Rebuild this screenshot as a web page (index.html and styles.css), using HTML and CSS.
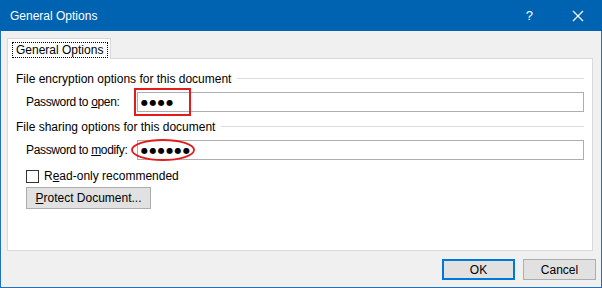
FILE: index.html
```html
<!DOCTYPE html>
<html lang="en">
<head>
    <meta charset="UTF-8">
    <title>General Options</title>
    <link rel="stylesheet" href="styles.css">
</head>
<body>
    <div class="window">
        <div class="titlebar">
            <span class="title">General Options</span>
            <span class="help">?</span>
            <svg class="close" width="12" height="12" viewBox="0 0 12 12">
                <path d="M1 1 L11 11 M11 1 L1 11" stroke="#fff" stroke-width="1.2" fill="none"/>
            </svg>
        </div>
        <div class="body">
            <div class="tabs">
                <div class="tab"><span class="tabLabel">General Options</span></div>
            </div>
            <div class="panel">
                <div class="groupHead">
                    <span>File encryption options for this document</span>
                    <div class="rule"></div>
                </div>
                <div class="row">
                    <label class="label">Password to <u>o</u>pen:</label>
                    <div class="field"><span class="dots">●●●●</span></div>
                    <div class="markRect"></div>
                </div>
                <div class="groupHead second">
                    <span>File sharing options for this document</span>
                    <div class="rule"></div>
                </div>
                <div class="row">
                    <label class="label">Password to <u>m</u>odify:</label>
                    <div class="field"><span class="dots">●●●●●●</span></div>
                    <svg class="markOval" width="66" height="24" viewBox="0 0 66 24">
                        <ellipse cx="33" cy="12" rx="31" ry="10" stroke="#e31b1b" stroke-width="1.8" fill="none"/>
                    </svg>
                </div>
                <div class="check">
                    <span class="box"></span>
                    <span>R<u>e</u>ad-only recommended</span>
                </div>
                <button class="btn protect"><u>P</u>rotect Document...</button>
            </div>
            <div class="footer">
                <button class="btn ok">OK</button>
                <button class="btn cancel">Cancel</button>
            </div>
        </div>
    </div>
</body>
</html>
```

FILE: styles.css
```css
body {
    margin: 0;
    font-family: "Liberation Sans", Arial, sans-serif;
    font-size: 12px;
    color: #000;
}

.window {
    width: 602px;
    height: 288px;
    box-sizing: border-box;
    border: 1px solid #1f72c0;
    border-top: none;
    background-color: #f0f0f0;
    display: flex;
    flex-direction: column;
}

.titlebar {
    height: 31px;
    margin: 0 -1px;
    background-color: #0063b1;
    color: #fff;
    display: flex;
    align-items: center;
    padding: 0 0 0 10px;
}

.title {
    flex: 1;
    font-size: 12px;
}

.help {
    font-size: 13px;
    margin-right: 39px;
}

.close {
    margin-right: 18px;
}

.body {
    flex: 1;
    padding: 7px 0 0 6px;
    display: flex;
    flex-direction: column;
}

.tabs {
    display: flex;
    height: 20px;
}

.tab {
    width: 104px;
    height: 21px;
    box-sizing: border-box;
    border: 1px solid #d9d9d9;
    border-bottom: none;
    background-color: #fff;
    position: relative;
    z-index: 1;
    padding: 3px 0 0 4px;
    white-space: nowrap;
}

.tabLabel {
    display: inline-block;
    border: 1px dotted #000;
    padding: 0 4px 0 3px;
    line-height: 14px;
}

.panel {
    width: 586px;
    height: 193px;
    box-sizing: border-box;
    border: 1px solid #d9d9d9;
    background-color: #fff;
    padding: 12px 8px 0 8px;
}

.groupHead {
    display: flex;
    align-items: center;
    height: 16px;
    white-space: nowrap;
}

.groupHead.second {
    margin-top: 7px;
}

.rule {
    flex: 1;
    height: 1px;
    background-color: #dcdcdc;
    margin: 0 0 1px 6px;
}

.row {
    display: flex;
    align-items: center;
    margin: 5px 0 0 10px;
    position: relative;
}

.label {
    width: 111px;
    white-space: nowrap;
    letter-spacing: -0.35px;
}

.field {
    flex: 1;
    height: 20px;
    box-sizing: border-box;
    border: 1px solid #adadad;
    display: flex;
    align-items: center;
    padding-left: 3px;
}

.dots {
    font-family: "DejaVu Sans", sans-serif;
    font-size: 8px;
    letter-spacing: 1.4px;
}

.markRect {
    position: absolute;
    left: 108px;
    top: -4px;
    width: 53px;
    height: 24px;
    border: 2px solid #e31b1b;
}

.markOval {
    position: absolute;
    left: 104px;
    top: -2px;
}

.check {
    display: flex;
    align-items: center;
    margin: 8px 0 0 10px;
    height: 16px;
}

.box {
    width: 11px;
    height: 11px;
    border: 1px solid #333;
    background-color: #fff;
    margin-right: 5px;
}

.btn {
    font-family: "Liberation Sans", Arial, sans-serif;
    font-size: 12px;
    color: #000;
    background-color: #e1e1e1;
    border: 1px solid #adadad;
    padding: 0;
    height: 21px;
}

.protect {
    display: block;
    width: 125px;
    margin: 3px 0 0 10px;
    height: 22px;
}

.footer {
    display: flex;
    justify-content: flex-end;
    gap: 8px;
    padding: 8px 5px 0 0;
}

.ok,
.cancel {
    width: 73px;
}

.ok {
    border: 2px solid #0078d7;
}
```
